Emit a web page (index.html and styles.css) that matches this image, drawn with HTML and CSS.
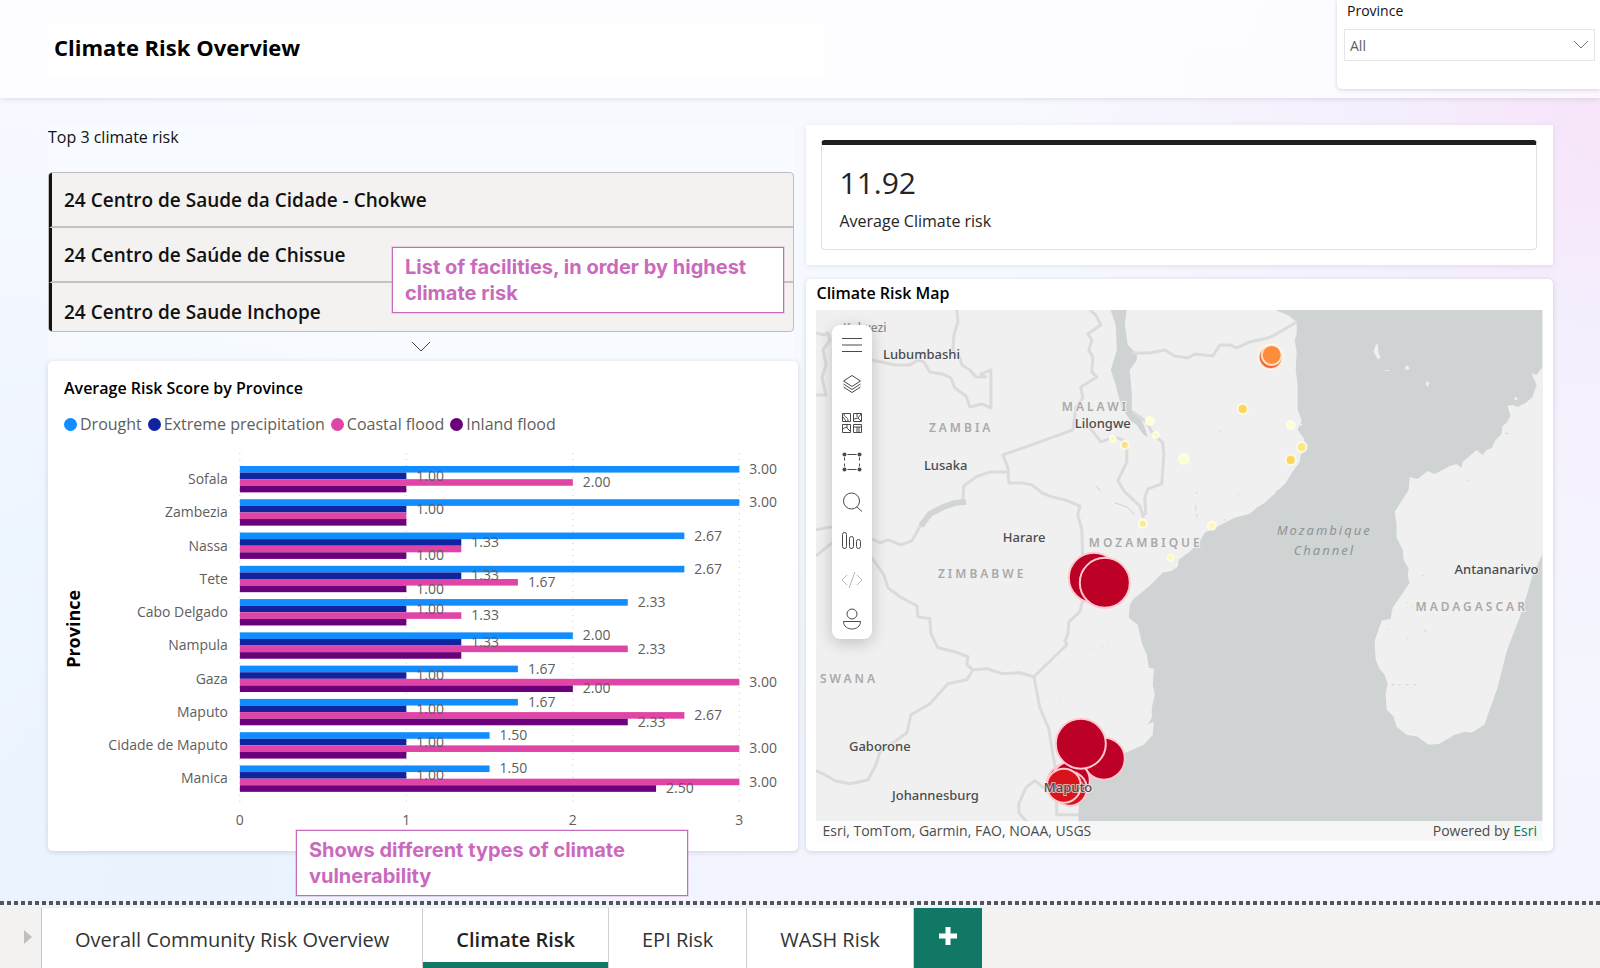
FILE: index.html
```html
<!DOCTYPE html>
<html lang="en">
<head>
<meta charset="utf-8">
<meta name="viewport" content="width=device-width, initial-scale=1">
<title>Climate Risk Overview</title>
<link rel="stylesheet" href="styles.css">
</head>
<body>
<div class="report">
  <header class="header">
    <div class="title-box"><h1 class="title">Climate Risk Overview</h1></div>
    <div class="slicer">
      <label class="slicer-label" for="province">Province</label>
      <div class="select-wrap">
        <select id="province" class="select"><option>All</option></select>
        <svg class="select-arrow" width="16" height="10" viewBox="0 0 16 10" aria-hidden="true"><path d="M1 1l7 7 7-7"/></svg>
      </div>
    </div>
  </header>

  <main class="main">
    <div class="column">
      <section class="top-risk">
        <h2 class="top-title">Top 3 climate risk</h2>
        <ul class="facility-list">
          <li class="facility">24 Centro de Saude da Cidade - Chokwe</li>
          <li class="facility">24 Centro de Saúde de Chissue</li>
          <li class="facility facility-last">24 Centro de Saude Inchope</li>
        </ul>
        <button class="more" aria-label="Show more"><svg width="20" height="12" viewBox="0 0 20 12"><path d="M1 1l9 9 9-9"/></svg></button>
        <p class="note note-list">List of facilities, in order by highest climate risk</p>
      </section>

      <section class="card chart-card">
        <h2 class="card-title">Average Risk Score by Province</h2>
        <ul class="legend">
          <li class="legend-item"><span class="dot drought"></span>Drought</li>
          <li class="legend-item"><span class="dot precipitation"></span>Extreme precipitation</li>
          <li class="legend-item"><span class="dot coastal"></span>Coastal flood</li>
          <li class="legend-item"><span class="dot inland"></span>Inland flood</li>
        </ul>
        <svg class="chart" id="chart" viewBox="0 0 751 414" role="img" aria-label="Average risk score by province"></svg>
        <p class="note note-chart">Shows different types of climate vulnerability</p>
      </section>
    </div>

    <div class="column column-right">
      <section class="kpi">
        <div class="kpi-box">
          <div class="kpi-value">11.92</div>
          <div class="kpi-label">Average Climate risk</div>
        </div>
      </section>

      <section class="card map-card">
        <h2 class="map-title">Climate Risk Map</h2>
        <div class="map">
          <svg class="map-svg" viewBox="816 310 727 531" role="img" aria-label="Climate risk map of Mozambique">
            <rect class="sea" x="816" y="310" width="727" height="531"/>
            <path class="land" d="M810 300H1262L1278 311 1288 315 1297 322 1297 334 1295 340 1297 352 1296 370 1298 385 1298 410 1302 420 1298 430 1304 438 1306 448 1301 455 1300 462 1292 473 1286 483 1278 491 1265 503 1257 508 1250 514 1235 518 1217 527 1205 533 1201 540 1190 552 1179 560 1178 567 1172 571 1163 573 1150 586 1134 599 1130 605 1129 618 1138 625 1142 643 1147 655 1149 668 1154 669 1153 685 1155 695 1152 708 1152 718 1148 725 1154 722 1153 735 1144 745 1128 752 1108 760 1090 772 1083 785 1079 800 1078 850H810Z"/>
            <path class="land" d="M1550 362L1543 367 1537 375 1532 373 1537 385 1533 397 1526 403 1518 407 1513 405 1508 406 1511 416 1507 423 1503 426 1502 434 1496 440 1492 448 1487 450 1483 455 1477 450 1463 462 1462 468 1457 464 1450 466 1443 470 1435 474 1428 471 1418 479 1410 477 1409 490 1395 512 1397 525 1397 538 1403 550 1404 560 1409 569 1408 576 1410 583 1400 598 1393 608 1391 619 1382 621 1375 641 1376 660 1380 669 1385 675 1388 684 1386 695 1387 710 1394 717 1397 727 1407 735 1418 737 1429 745 1440 744 1455 735 1466 732 1472 733 1485 725 1489 713 1498 688 1507 652 1523 610 1533 576 1543 554 1550 540Z"/>
            <path class="land" d="M1376 345l2-1 1 9 2 5-3 1-4-7zM1386 370h4l-1 1-4 0zM1408 365l2 4-3 1-2-2zM1427 381l3 2-2 4-2-3zM1515 397l2 0 1 3-3 0zM1300 423l3 1-2 3z"/>
            <path class="sea" d="M1110 308L1116 325 1117 350 1111 370 1115 382 1122 408 1131 421 1137 425 1143 434 1148 437 1145 428 1141 418 1132 410 1132 395 1130 370 1137 360 1137 354 1128 345 1125 325 1127 308Z"/>
            <path class="border" d="M957 310L958 322 954 335 953 350 960 358 962 365 970 370 976 377 986 377 981 374 991 370V408L982 404 970 407 966 396 955 388 951 378 942 374 930 372 924 362 918 360 910 365 895 365 872 360M816 333L824 335 828 333 830 340 823 350 826 365 822 378 826 395H816"/>
            <path class="border" d="M1090 310L1096 315 1101 325 1088 334 1092 340 1089 350 1093 357 1092 372 1097 377 1081 387 1083 398 1076 408 1073 430 1040 442 1003 455 1008 468 1009 483 1022 483 1032 485 1042 493 1052 497 1065 500 1080 506 1078 515 1082 530 1083 560 1088 580 1083 600 1080 612 1069 622 1068 635 1065 641 1067 645 1034 677M1088 425L1101 442 1115 437 1123 440 1127 448 1127 462 1118 481 1125 492 1140 506 1144 518M1133 412L1147 422 1152 432 1163 443 1164 455 1162 484 1148 489 1145 498 1146 515"/>
            <path class="border" d="M1132 353L1150 353 1165 350 1175 356 1188 358 1195 354 1213 356 1220 345 1230 345 1237 348 1250 342 1268 338 1275 335 1297 322"/>
            <path class="border" d="M1008 472L990 472 976 477 964 486 963 500M921 525L912 541 901 545 888 540 880 543 872 539M872 558L884 575 888 588 900 597 917 606 918 617 930 619 931 634 938 648 955 652 968 657 967 665 973 670 987 669 1003 674 1020 673 1034 677 1040 708 1049 729 1053 755 1056 770 1057 815H1079M816 530L832 527M816 556L832 543M973 670L967 680 948 684 930 704 911 715 907 733 896 741 880 752 876 765 868 780 860 782 850 784 835 781 825 775 816 771M1046 790L1035 781 1026 788 1019 804 1019 813 1027 822"/>
            <path class="lake" d="M921 526L930 514 944 507 955 503 966 502"/>
            <path class="specks" d="M1096 486l5 5M1115 503l12 4 8 8M1197 492v2M1196 506v5M1197 514v3M1239 494v1M1225 519v2M1276 492l3-2M1219 431h2M1093 649h1M1102 647h1M1108 645h1M1060 702h1M1506 433l3 1M1468 481h2M1422 576l2-1M1407 603h1M1412 607h1M1387 629l1 1M1424 631h3M1407 639h1M1392 685h3M1399 685h2M1406 685h3M1414 685h3M1414 730v1"/>

            <g class="country">
              <text x="1062" y="411">MALAWI</text>
              <text x="929" y="432">ZAMBIA</text>
              <text x="1089" y="547">MOZAMBIQUE</text>
              <text x="938" y="578">ZIMBABWE</text>
              <text x="820" y="683">SWANA</text>
              <text x="1416" y="611">MADAGASCAR</text>
            </g>
            <g class="ocean">
              <text x="1277" y="535">Mozambique</text>
              <text x="1294" y="555">Channel</text>
            </g>
            <g class="city">
              <text class="faint" x="843" y="332">Kolwezi</text>
              <text x="883" y="359">Lubumbashi</text>
              <text x="1075" y="428">Lilongwe</text>
              <text x="924" y="470">Lusaka</text>
              <text x="1003" y="542">Harare</text>
              <text x="849" y="751">Gaborone</text>
              <text x="892" y="800">Johannesburg</text>
              <text x="1455" y="574">Antananarivo</text>
            </g>

            <g class="pin">
              <circle cx="1271" cy="357" r="12" fill="#f0642d"/>
              <circle cx="1272" cy="355" r="10" fill="#fd8d3c"/>
              <circle cx="1243" cy="409" r="5" fill="#fcd55f"/>
              <circle cx="1291" cy="460" r="5" fill="#fcd55f"/>
              <circle cx="1302" cy="447" r="5" fill="#fbe88a"/>
              <circle cx="1125" cy="445" r="4" fill="#fbe08a"/>
              <circle cx="1143" cy="524" r="4" fill="#fbeb94"/>
              <circle cx="1184" cy="459" r="5" fill="#ffffcc"/>
              <circle cx="1291" cy="425" r="4" fill="#ffffcc"/>
              <circle cx="1150" cy="421" r="4" fill="#ffffcc"/>
              <circle cx="1156" cy="435" r="3" fill="#fff9b4"/>
              <circle cx="1113" cy="439" r="3" fill="#fff9b4"/>
              <circle cx="1212" cy="526" r="4" fill="#fff9b4"/>
              <circle cx="1171" cy="558" r="3" fill="#fff9a0"/>
            </g>
            <g class="pin pin-high">
              <circle cx="1094" cy="578" r="25"/>
              <circle cx="1105" cy="583" r="25"/>
              <circle cx="1104" cy="759" r="21"/>
              <circle cx="1067" cy="784" r="20"/>
              <circle cx="1071" cy="781" r="19"/>
              <circle cx="1081" cy="744" r="25"/>
              <circle cx="1070" cy="789" r="17" fill="#d41220"/>
              <circle cx="1064" cy="786" r="17" fill="#d7141c"/>
            </g>
            <g class="city"><text x="1044" y="792">Maputo</text></g>
          </svg>

          <div class="toolbar">
            <button class="tool" aria-label="Menu"><svg viewBox="0 0 24 24"><path d="M2 5.500h20M2 12h20M2 18.500h20"/></svg></button>
            <button class="tool" aria-label="Layers"><svg viewBox="0 0 24 24"><path d="M12 3.500l8.500 5.500-8.500 5.500L3.500 9zM3.500 12l8.500 5.500 8.500-5.500M3.500 15l8.500 5.500 8.500-5.500"/></svg></button>
            <button class="tool" aria-label="Basemap"><svg viewBox="0 0 24 24"><path d="M2.500 2.500h8v8h-8zM13.500 2.500h8v8h-8zM2.500 13.500h8v8h-8zM13.500 13.500h8v8h-8zM4 3c0 4 4 2 4 7M3 6l3 4M14 8l4-1 3-4M17 3v3M18 7l3 3M3 18l3-2 4 4M7 14v3M14 16h7M17 16v5M19 16v5"/></svg></button>
            <button class="tool" aria-label="Select"><svg viewBox="0 0 24 24"><path d="M7.500 4.500h9M7.500 19.500h9M4.500 7.500v3M4.500 13.500v3M19.500 7.500v3M19.500 13.500v3"/><g class="solid"><circle cx="4.500" cy="4.500" r="2"/><circle cx="19.500" cy="4.500" r="2"/><circle cx="4.500" cy="19.500" r="2"/><circle cx="19.500" cy="19.500" r="2"/></g></svg></button>
            <button class="tool" aria-label="Search"><svg viewBox="0 0 24 24"><circle cx="11.500" cy="12" r="8"/><path d="M17 18l5 4.500"/></svg></button>
            <button class="tool" aria-label="Statistics"><svg viewBox="0 0 24 24"><rect x="2.500" y="4.500" width="4" height="16" rx="2"/><rect x="9.500" y="8.500" width="4" height="12" rx="2"/><rect x="16.500" y="11.500" width="4" height="9" rx="2"/></svg></button>
            <button class="tool tool-off" aria-label="Code" disabled><svg viewBox="0 0 24 24"><path d="M7 8l-5 5 5 5M17 8l5 5-5 5M15 5L9 21"/></svg></button>
            <button class="tool" aria-label="Account"><svg viewBox="0 0 24 24"><circle cx="12" cy="8" r="5"/><path d="M3.500 15.500h17c0 10-17 10-17 0z"/></svg></button>
          </div>

          <div class="attribution">
            <span>Esri, TomTom, Garmin, FAO, NOAA, USGS</span>
            <span>Powered by <a class="esri" href="#esri">Esri</a></span>
          </div>
        </div>
      </section>
    </div>
  </main>
</div>

<nav class="tabs" aria-label="Report pages">
  <button class="tab-scroll" aria-label="Next pages"><svg width="8" height="14" viewBox="0 0 8 14"><path d="M0 0l8 7-8 7z"/></svg></button>
  <a class="tab" href="#overall">Overall Community Risk Overview</a>
  <a class="tab tab-active" href="#climate" aria-current="page">Climate Risk</a>
  <a class="tab" href="#epi">EPI Risk</a>
  <a class="tab" href="#wash">WASH Risk</a>
  <button class="tab-add" aria-label="Add page"><svg width="20" height="20" viewBox="0 0 20 20"><path d="M10 1v18M1 10h18"/></svg></button>
</nav>
<script src="chart.js"></script>
</body>
</html>
```
FILE: styles.css
```css
* { box-sizing: border-box; }

body {
  margin: 0;
  min-height: 100vh;
  display: flex;
  flex-direction: column;
  font-family: "Open Sans", "Noto Sans", sans-serif;
  font-size: 15px;
  color: #111;
}

h1, h2, p, ul { margin: 0; padding: 0; font-weight: 600; }
ul { list-style: none; font-weight: 400; }
button { border: 0; padding: 0; background: none; font: inherit; cursor: pointer; }

.report {
  flex: 1;
  padding-bottom: 48px;
  background:
    radial-gradient(circle at 100% 13%, #f7e4f9 0, rgba(243, 232, 251, 0.6) 12%, rgba(240, 238, 252, 0) 34%),
    radial-gradient(circle at 12% 100%, #e8f3fe 0, rgba(236, 244, 254, 0) 34%),
    radial-gradient(circle at 0 60%, #f0f6ff 0, rgba(240, 246, 255, 0) 30%),
    linear-gradient(180deg, #f9f9ff 0, #f6f9ff 35%, #f3f4fe 100%);
}

.header {
  display: flex;
  justify-content: space-between;
  align-items: flex-start;
  height: 98px;
  padding-left: 48px;
  background: rgba(255, 255, 255, 0.7);
  box-shadow: 0 1px 5px rgba(60, 60, 90, 0.15);
}
.title-box {
  width: 50%;
  height: 52px;
  margin-top: 24px;
  padding: 0 6px;
  background: #fff;
}
.title { font-size: 22px; line-height: 46px; font-weight: 700; color: #000; }

.slicer {
  width: 263px;
  height: 89px;
  padding: 0 5px 0 7px;
  background: #fff;
  border-radius: 0 0 0 5px;
  box-shadow: 0 1px 4px rgba(60, 60, 90, 0.2);
}
.slicer-label { display: block; padding-left: 3px; font-size: 14px; line-height: 22px; margin-bottom: 7px; }
.select-wrap { position: relative; }
.select {
  width: 100%;
  height: 32px;
  padding: 0 5px;
  appearance: none;
  border: 1px solid #e6e6e6;
  border-radius: 0;
  background: #fff;
  font: inherit;
  font-size: 14px;
  color: #605e5c;
}
.select-arrow { position: absolute; right: 6px; top: 11px; fill: none; stroke: #777; pointer-events: none; }

.main {
  display: grid;
  grid-template-columns: 751fr 747fr;
  gap: 8px;
  padding: 27px 47px 0 48px;
}
.column { display: flex; flex-direction: column; }
.column-right { gap: 14px; }

.top-risk { position: relative; background: rgba(250, 253, 255, 0.5); width: 746px; max-width: 100%; }
.top-title { font-size: 16px; line-height: 24px; font-weight: 500; margin-bottom: 23px; }
.facility-list {
  border: 1px solid #bdbdbd;
  border-radius: 4px;
  overflow: hidden;
  background: #f3f2f1;
}
.facility {
  padding: 2px 0 0 12px;
  border-left: 3px solid #111;
  border-bottom: 2px solid #c4c3c2;
  font-size: 19px;
  line-height: 51px;
  font-weight: 600;
}
.facility-last { height: 48px; padding-top: 4px; border-bottom: 0; }
.more { display: flex; justify-content: center; width: 100%; height: 29px; padding-top: 9px; }
.more svg { fill: none; stroke: #444; }

.note {
  position: absolute;
  width: 392px;
  padding: 6px 12px;
  background: #fff;
  border: 1px solid #c56bb9;
  outline: 1px solid rgba(197, 107, 185, 0.25);
  font-family: Inter, sans-serif;
  font-size: 20px;
  line-height: 26px;
  font-weight: 700;
  color: #ca6abd;
}
.note-list { right: 10px; top: 122px; }
.note-chart { left: 248px; bottom: -45px; }

.card {
  position: relative;
  background: #fff;
  border-radius: 5px;
  box-shadow: 0 1px 5px rgba(60, 70, 110, 0.2);
}
.card-title { padding: 16px 16px 0; font-size: 16px; line-height: 22px; color: #000; }
.legend { display: flex; gap: 6px; padding: 0 16px; margin-top: 13px; line-height: 25px; font-size: 16px; color: #605e5c; }
.legend-item { display: flex; align-items: center; gap: 3px; }
.dot { width: 13px; height: 13px; border-radius: 50%; }
.drought { background: #118dff; }
.precipitation { background: #12239e; }
.coastal { background: #e044a7; }
.inland { background: #6b007b; }

.chart { display: block; width: 100%; height: auto; font-size: 14px; fill: #605e5c; }
.fill-drought { fill: #118dff; }
.fill-precipitation { fill: #12239e; }
.fill-coastal { fill: #e044a7; }
.fill-inland { fill: #6b007b; }
.grid-line { stroke: #c4c4c4; stroke-dasharray: 1 5; }
.axis-title { font-size: 18px; font-weight: 700; fill: #000; }

.kpi { padding: 15px 16px 15px 15px; height: 140px; background: #fff; box-shadow: 0 1px 5px rgba(60, 70, 110, 0.12); }
.kpi-box {
  height: 110px;
  padding: 20px 17px;
  border: 1px solid #e1e1e1;
  border-top: 5px solid #1f1f1f;
  border-radius: 4px;
  color: #252423;
}
.kpi-value { font-size: 30px; line-height: 36px; font-weight: 500; }
.kpi-label { font-size: 16px; line-height: 24px; margin-top: 8px; font-weight: 500; }

.map-card { padding: 0 10px 10px; }
.map-title { font-size: 16px; line-height: 22px; padding: 3px 0 6px; color: #000; }
.map { position: relative; overflow: hidden; }
.map-svg { display: block; width: 100%; height: auto; font-family: "Noto Sans", "Open Sans", sans-serif; }
.sea { fill: #cfd3d4; }
.land { fill: #f0f0f0; }
.border { fill: none; stroke: #dbdbdb; stroke-width: 3; stroke-linejoin: round; }
.lake { fill: none; stroke: #d2d5d6; stroke-width: 6; }
.specks { fill: none; stroke: #cfd3d4; }
.country { font-size: 12px; font-weight: 600; letter-spacing: 3px; fill: #a9a9a9; stroke: #f0f0f0; stroke-width: 2; paint-order: stroke; }
.ocean { font-size: 13px; font-style: italic; letter-spacing: 2px; fill: #8f9496; }
.city { font-size: 13px; font-weight: 500; fill: #4c4c4c; stroke: rgba(240, 240, 240, 0.7); stroke-width: 2; paint-order: stroke; }
.faint { font-size: 12px; fill: #8a8a8a; }
.pin { stroke: rgba(255, 255, 240, 0.75); stroke-width: 2; }
.pin-high { fill: #bd0026; stroke: #ffc9cf; }

.toolbar {
  position: absolute;
  left: 16px;
  top: 15px;
  width: 40px;
  padding: 0 8px 2px;
  display: flex;
  flex-direction: column;
  background: #fff;
  border-radius: 8px;
  box-shadow: 0 4px 16px rgba(0, 0, 0, 0.2);
}
.tool { height: 39px; width: 24px; display: flex; align-items: center; }
.tool svg { width: 24px; height: 24px; fill: none; stroke: #4a4a4a; stroke-width: 1; }
.tool .solid { fill: #4a4a4a; stroke: none; }
.tool-off svg { stroke: #b5b5b5; }

.attribution {
  position: absolute;
  left: 0;
  right: 0;
  bottom: 0;
  display: flex;
  justify-content: space-between;
  padding: 0 6px;
  background: rgba(255, 255, 255, 0.8);
  font-size: 14px;
  line-height: 20px;
  color: #4c4c4c;
}
.esri { color: #117865; text-decoration: none; }

.tabs {
  position: relative;
  display: flex;
  height: 67px;
  padding-top: 7px;
  background: linear-gradient(#edf3fd 7px, #f3f2f1 7px);
}
.tabs::before {
  content: "";
  position: absolute;
  left: 0;
  right: 0;
  top: 0;
  height: 4px;
  background: repeating-linear-gradient(90deg, #555 0 4px, transparent 4px 7px);
}
.tab-scroll { width: 42px; padding-left: 14px; border-right: 1px solid #c8c6c4; }
.tab-scroll svg { fill: #c0bfbd; }
.tab {
  padding: 0 33px;
  border-right: 1px solid #d2d0ce;
  background: #fff;
  font-size: 20px;
  line-height: 64px;
  color: #333;
  text-decoration: none;
}
.tab-active { font-weight: 600; color: #222; box-shadow: inset 0 -6px #117865; }
.tab-add { width: 68px; background: #117865; }
.tab-add svg { stroke: #fff; stroke-width: 5; fill: none; }
```
FILE: chart.js
```js
const series = ["drought", "precipitation", "coastal", "inland"];

// The third entry flags which value labels are shown; the others collide with a neighbour.
const rows = [
  ["Sofala", [3, 1, 2, 1], [1, 1, 1, 0]],
  ["Zambezia", [3, 1, 1, 1], [1, 1, 0, 0]],
  ["Nassa", [2.67, 1.33, 1.33, 1], [1, 1, 0, 1]],
  ["Tete", [2.67, 1.33, 1.67, 1], [1, 1, 1, 1]],
  ["Cabo Delgado", [2.33, 1, 1.33, 1], [1, 1, 1, 0]],
  ["Nampula", [2, 1.33, 2.33, 1.33], [1, 1, 1, 0]],
  ["Gaza", [1.67, 1, 3, 2], [1, 1, 1, 1]],
  ["Maputo", [1.67, 1, 2.67, 2.33], [1, 1, 1, 1]],
  ["Cidade de Maputo", [1.5, 1, 3, 1], [1, 1, 1, 0]],
  ["Manica", [1.5, 1, 3, 2.5], [1, 1, 1, 1]]
];

const left = 192, unit = 166.6, firstRow = 29, pitch = 33.3, bar = 6.6;
let out = "";

for (let i = 0; i <= 3; i++) {
  const x = left + i * unit;
  out += `<line class="grid-line" x1="${x}" x2="${x}" y1="16" y2="370"/>`;
  out += `<text x="${x}" y="388" text-anchor="middle">${i}</text>`;
}

rows.forEach(([name, values, shown], r) => {
  const y = firstRow + r * pitch;
  out += `<text x="180" y="${y + 18}" text-anchor="end">${name}</text>`;
  values.forEach((v, i) => {
    out += `<rect class="fill-${series[i]}" x="${left}" y="${y + i * bar}" width="${v * unit}" height="${bar}"/>`;
  });
  values.forEach((v, i) => {
    if (shown[i]) out += `<text x="${left + v * unit + 10}" y="${y + i * bar + 8}">${v.toFixed(2)}</text>`;
  });
});

out += `<text class="axis-title" transform="translate(32 192) rotate(-90)" text-anchor="middle">Province</text>`;
document.getElementById("chart").innerHTML = out;
```
